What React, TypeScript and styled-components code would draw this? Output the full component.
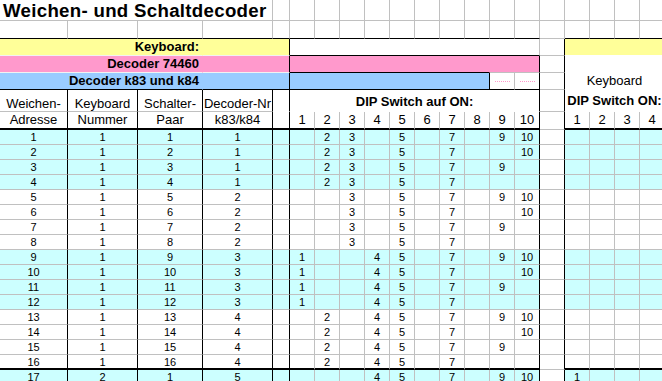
import React from 'react';
import styled, { createGlobalStyle } from 'styled-components';

const GRID = '#c0c0c0';
const BLACK = '#000000';
const WHITE = '#ffffff';
const SOFT = '#f2f2f2';
const YELLOW = '#ffff99';
const PINK = '#ff99cc';
const BLUE = '#99ccff';
const CYAN = '#ccffff';

const COLS = [68, 70, 65, 70, 17, ...Array(10).fill(25), 25, 25, 25, 25, 25];
const ROWS = [21, 18, 17, 17, 17, 22, 18, ...Array(17).fill(15)];

const GlobalStyle = createGlobalStyle`
  html, body { margin: 0; padding: 0; background: #fff; overflow: hidden; }
  body { font-family: "Liberation Sans", Arial, sans-serif; color: #000; }
`;

const Sheet = styled.div`
  display: grid;
  grid-template-columns: ${COLS.map((w) => `${w}px`).join(' ')};
  grid-template-rows: ${ROWS.map((h) => `${h}px`).join(' ')};
  width: 662px;
  height: 381px;
  overflow: hidden;
  background: #fff;
`;

type CellProps = {
  $span?: number;
  $fill?: string;
  $right?: string;
  $bottom?: string;
  $thick?: boolean;
  $align?: 'left' | 'center' | 'right';
  $valign?: 'center' | 'end';
  $pb?: number;
};

const Cell = styled.div<CellProps>`
  box-sizing: border-box;
  grid-column: span ${(p) => p.$span ?? 1};
  min-width: 0;
  background: ${(p) => p.$fill ?? WHITE};
  border-right: 1px solid ${(p) => p.$right ?? p.$fill ?? WHITE};
  border-bottom: ${(p) => (p.$thick ? 2 : 1)}px solid ${(p) => p.$bottom ?? p.$fill ?? WHITE};
  display: flex;
  align-items: ${(p) => (p.$valign === 'end' ? 'flex-end' : 'center')};
  justify-content: ${(p) =>
    p.$align === 'left' ? 'flex-start' : p.$align === 'right' ? 'flex-end' : 'center'};
  padding: 0 2px ${(p) => p.$pb ?? 0}px;
  font-size: 13px;
  line-height: 14px;
  white-space: nowrap;
  color: #000;
`;

const TitleCell = styled(Cell)`
  font-size: 18.67px;
  font-weight: 700;
  line-height: 21px;
  letter-spacing: 0.3px;
  padding-left: 3px;
`;

const BannerCell = styled(Cell)`
  font-weight: 700;
  padding-right: 3px;
`;

const HeadCell = styled(Cell)<{ $bold?: boolean }>`
  font-weight: ${(p) => (p.$bold ? 700 : 400)};
`;

const DataCell = styled(Cell)`
  font-size: 11px;
`;

const Dots = styled.span`
  display: block;
  width: 15px;
  border-top: 1px dotted ${PINK};
`;

const DECODER_SWITCHES: Record<number, number[]> = {
  1: [2, 3],
  2: [3],
  3: [1, 4],
  4: [2, 4],
  5: [4],
};

function switchesFor(n: number): number[] {
  const d = Math.ceil(n / 4);
  const r = n % 4;
  const low = r === 1 ? [9, 10] : r === 2 ? [10] : r === 3 ? [9] : [];
  return [...DECODER_SWITCHES[d], 5, 7, ...low];
}

const DIP = Array.from({ length: 10 }, (_, i) => i + 1);
const RIGHT = [1, 2, 3, 4];

const rowsData = Array.from({ length: 17 }, (_, i) => {
  const n = i + 1;
  return {
    n,
    keyboard: Math.ceil(n / 16),
    pair: ((n - 1) % 16) + 1,
    decoder: Math.ceil(n / 4),
    on: switchesFor(n),
    right: n === 17 ? [1] : [],
    cyan: Math.floor((n - 1) / 4) % 2 === 0,
  };
});

function GridRow({ bottomLeft, bottomRight }: { bottomLeft: string; bottomRight: string }) {
  return (
    <>
      {Array.from({ length: 15 }, (_, i) => (
        <Cell key={`l${i}`} $right={GRID} $bottom={bottomLeft} />
      ))}
      <Cell $right={GRID} $bottom={GRID} />
      {RIGHT.map((c) => (
        <Cell key={`r${c}`} $right={GRID} $bottom={bottomRight} />
      ))}
    </>
  );
}

export default function App() {
  const heads: [string, string][] = [
    ['Weichen-', 'Adresse'],
    ['Keyboard', 'Nummer'],
    ['Schalter-', 'Paar'],
    ['Decoder-Nr', 'k83/k84'],
  ];

  return (
    <>
      <GlobalStyle />
      <Sheet>
        {/* Row 1: title */}
        <TitleCell $span={4} $align="left" $right={GRID} $bottom={GRID}>
          Weichen- und Schaltdecoder
        </TitleCell>
        {Array.from({ length: 16 }, (_, i) => (
          <Cell key={`t${i}`} $right={GRID} $bottom={GRID} />
        ))}

        {/* Row 2: empty */}
        <GridRow bottomLeft={BLACK} bottomRight={BLACK} />

        {/* Row 3: Keyboard */}
        <BannerCell $span={3} $fill={YELLOW} $align="right" $bottom={SOFT}>
          Keyboard:
        </BannerCell>
        <Cell $span={2} $fill={YELLOW} $right={BLACK} $bottom={SOFT} />
        <Cell $span={10} $right={GRID} $bottom={BLACK} />
        <Cell $right={BLACK} $bottom={GRID} />
        <Cell $span={4} $fill={YELLOW} $right={GRID} $bottom={WHITE} />

        {/* Row 4: Decoder 74460 */}
        <BannerCell $span={3} $fill={PINK} $align="right" $bottom={SOFT}>
          Decoder 74460
        </BannerCell>
        <Cell $span={2} $fill={PINK} $right={BLACK} $bottom={SOFT} />
        <Cell $span={8} $fill={PINK} $bottom={BLACK} />
        <Cell $span={2} $fill={PINK} $right={BLACK} $bottom={GRID} />
        <Cell $right={BLACK} $bottom={GRID} />
        <Cell $span={4} $right={GRID} $bottom={WHITE} />

        {/* Row 5: Decoder k83 und k84 */}
        <BannerCell $span={3} $fill={BLUE} $align="right" $bottom={BLACK}>
          Decoder k83 und k84
        </BannerCell>
        <Cell $span={2} $fill={BLUE} $right={BLACK} $bottom={BLACK} />
        <Cell $span={8} $fill={BLUE} $right={BLACK} $bottom={BLACK} />
        <Cell $right={GRID} $bottom={BLACK}>
          <Dots />
        </Cell>
        <Cell $right={BLACK} $bottom={BLACK}>
          <Dots />
        </Cell>
        <Cell $right={BLACK} $bottom={GRID} />
        <HeadCell $span={4} $right={GRID} $bottom={WHITE}>
          Keyboard
        </HeadCell>

        {/* Row 6: header line 1 */}
        {heads.map(([top]) => (
          <HeadCell key={top} $valign="end" $right={BLACK} $bottom={GRID}>
            {top}
          </HeadCell>
        ))}
        <Cell $right={BLACK} $bottom={WHITE} />
        <HeadCell $span={10} $bold $valign="end" $pb={2} $right={BLACK} $bottom={WHITE}>
          DIP Switch auf ON:
        </HeadCell>
        <Cell $right={BLACK} $bottom={GRID} />
        <HeadCell $span={4} $bold $right={GRID} $bottom={WHITE}>
          DIP Switch ON:
        </HeadCell>

        {/* Row 7: header line 2 */}
        {heads.map(([, bottom]) => (
          <HeadCell key={bottom} $right={BLACK} $bottom={BLACK} $thick>
            {bottom}
          </HeadCell>
        ))}
        <Cell $right={BLACK} $bottom={BLACK} $thick />
        {DIP.map((d) => (
          <HeadCell key={`h${d}`} $right={d === 10 ? BLACK : GRID} $bottom={BLACK} $thick>
            {d}
          </HeadCell>
        ))}
        <Cell $right={BLACK} $bottom={GRID} />
        {RIGHT.map((d) => (
          <HeadCell key={`hr${d}`} $right={GRID} $bottom={BLACK} $thick>
            {d}
          </HeadCell>
        ))}

        {/* Data rows */}
        {rowsData.map((r) => {
          const fill = r.cyan ? CYAN : WHITE;
          const thick = r.n === 16;
          const bottom = thick ? BLACK : GRID;
          return (
            <React.Fragment key={r.n}>
              {[r.n, r.keyboard, r.pair, r.decoder].map((v, i) => (
                <DataCell key={`v${i}`} $fill={fill} $right={BLACK} $bottom={bottom} $thick={thick}>
                  {v}
                </DataCell>
              ))}
              <DataCell $fill={fill} $right={BLACK} $bottom={bottom} $thick={thick} />
              {DIP.map((d) => (
                <DataCell
                  key={`d${d}`}
                  $fill={fill}
                  $right={d === 10 ? BLACK : GRID}
                  $bottom={bottom}
                  $thick={thick}
                >
                  {r.on.includes(d) ? d : ''}
                </DataCell>
              ))}
              <DataCell $right={BLACK} $bottom={GRID} />
              {RIGHT.map((d) => (
                <DataCell key={`q${d}`} $fill={fill} $right={GRID} $bottom={bottom} $thick={thick}>
                  {r.right.includes(d) ? d : ''}
                </DataCell>
              ))}
            </React.Fragment>
          );
        })}
      </Sheet>
    </>
  );
}
